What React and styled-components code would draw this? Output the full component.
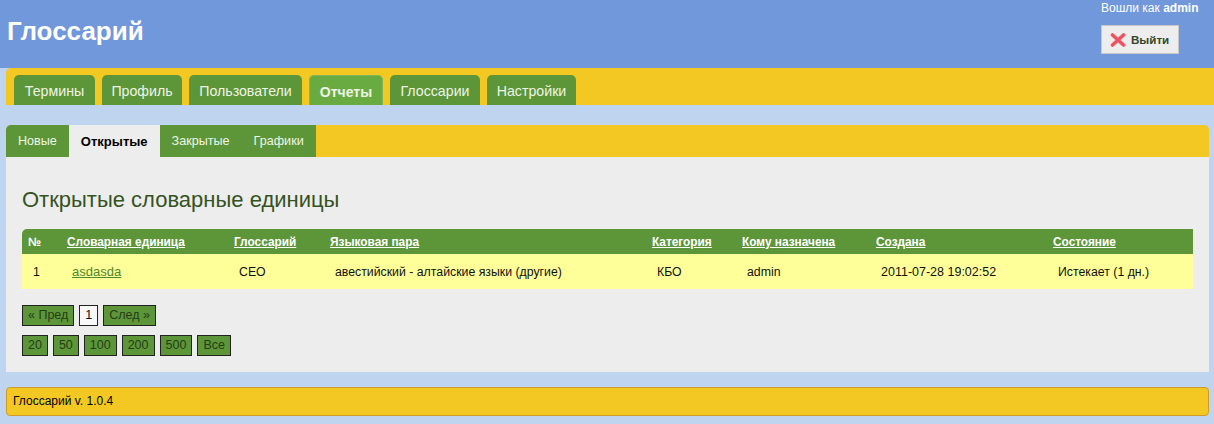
import styled, { createGlobalStyle } from 'styled-components';

const GlobalStyle = createGlobalStyle`
    html, body {
        margin: 0;
        padding: 0;
        background: #BFD4EE;
        font-family: "Liberation Sans", Arial, sans-serif;
        font-size: 12px;
    }
`;

const mainTabs = [
    ['Термины', 81], ['Профиль', 80], ['Пользователи', 113],
    ['Отчеты', 74], ['Глоссарии', 90], ['Настройки', 89],
];
const subTabs = ['Новые', 'Открытые', 'Закрытые', 'Графики'];
const columns = [
    ['№', 39], ['Словарная единица', 167], ['Глоссарий', 96], ['Языковая пара', 322],
    ['Категория', 90], ['Кому назначена', 134], ['Создана', 177], ['Состояние', 146],
];
const cells = ['1', 'asdasda', 'CEO', 'авестийский - алтайские языки (другие)', 'КБО', 'admin', '2011-07-28 19:02:52', 'Истекает (1 дн.)'];
const sizes = ['20', '50', '100', '200', '500', 'Все'];

export default function App() {
    return (
        <Page>
            <GlobalStyle />
            <Header>
                <Logo>Глоссарий</Logo>
                <UserBox>
                    <span>Вошли как <b>admin</b></span>
                    <LogoutButton>
                        <svg width="16" height="14" viewBox="0 0 16 14">
                            <path d="M2.5 2 L13.5 12 M13.5 2 L2.5 12" stroke="#F0525F" strokeWidth="3.6" strokeLinecap="round" />
                        </svg>
                        Выйти
                    </LogoutButton>
                </UserBox>
            </Header>
            <MainNav>
                {mainTabs.map(([tab, width]) => (
                    <MainTab key={tab} $width={width} $active={tab === 'Отчеты'}>{tab}</MainTab>
                ))}
            </MainNav>
            <Content>
                <SubNav>
                    {subTabs.map((tab) => (
                        <SubTab key={tab} $active={tab === 'Открытые'}>{tab}</SubTab>
                    ))}
                </SubNav>
                <Panel>
                    <Title>Открытые словарные единицы</Title>
                    <Table>
                        <colgroup>
                            {columns.map(([name, width]) => <col key={name} width={width} />)}
                        </colgroup>
                        <thead>
                            <tr>
                                {columns.map(([name], i) => (
                                    <th key={name}>{i === 0 ? name : <a href="#">{name}</a>}</th>
                                ))}
                            </tr>
                        </thead>
                        <tbody>
                            <tr>
                                {cells.map((cell, i) => (
                                    <td key={cell}>{i === 1 ? <a href="#">{cell}</a> : cell}</td>
                                ))}
                            </tr>
                        </tbody>
                    </Table>
                    <Pager>
                        <PageButton>« Пред</PageButton>
                        <PageButton $current>1</PageButton>
                        <PageButton>След »</PageButton>
                    </Pager>
                    <Pager>
                        {sizes.map((size) => <PageButton key={size}>{size}</PageButton>)}
                    </Pager>
                </Panel>
                <Footer>Глоссарий v. 1.0.4</Footer>
            </Content>
        </Page>
    );
}

const Page = styled.div`
    width: 1214px;
    height: 424px;
    overflow: hidden;
`;

const Header = styled.header`
    height: 68px;
    background: #7098DA;
    display: flex;
    justify-content: space-between;
    color: #fff;
`;

const Logo = styled.div`
    font-size: 26px;
    font-weight: 700;
    padding: 16px 0 0 7px;
    line-height: 30px;
`;

const UserBox = styled.div`
    width: 113px;
    font-size: 12px;
    line-height: 14px;
    display: flex;
    flex-direction: column;
    align-items: flex-start;
    gap: 10px;
    padding-top: 1px;
`;

const LogoutButton = styled.div`
    width: 78px;
    height: 29px;
    box-sizing: border-box;
    background: #EDEDED;
    border: 1px solid #C8C8C8;
    color: #33452C;
    font-weight: 700;
    font-size: 11.6px;
    display: flex;
    align-items: center;
    gap: 5px;
    padding-left: 8px;
`;

const MainNav = styled.nav`
    height: 37px;
    box-sizing: border-box;
    margin-left: 6px;
    padding: 7px 0 0 8px;
    background: #F3C823;
    border-top-left-radius: 5px;
    display: flex;
    gap: 7px;
    align-items: flex-end;
`;

const MainTab = styled.div`
    width: ${(p) => p.$width}px;
    height: 30px;
    box-sizing: border-box;
    text-align: center;
    line-height: ${(p) => (p.$active ? '32px' : '33px')};
    font-size: ${(p) => (p.$active ? '14px' : '14.2px')};
    font-weight: ${(p) => (p.$active ? 700 : 400)};
    color: #EEF5E6;
    background: ${(p) => (p.$active ? '#6AAB41' : '#5C9639')};
    border: ${(p) => (p.$active ? '1px solid #7DB55A' : 'none')};
    border-bottom: none;
    border-top-left-radius: 5px;
    border-top-right-radius: 5px;
`;

const Content = styled.main`
    padding: 20px 5px 0 6px;
`;

const SubNav = styled.div`
    height: 32px;
    background: #F3C823;
    border-top-left-radius: 5px;
    border-top-right-radius: 5px;
    display: flex;
    overflow: hidden;
`;

const SubTab = styled.div`
    padding: 0 12px;
    line-height: 33px;
    font-size: ${(p) => (p.$active ? '13px' : '12.6px')};
    font-weight: ${(p) => (p.$active ? 700 : 400)};
    color: ${(p) => (p.$active ? '#000' : '#EEF5E6')};
    background: ${(p) => (p.$active ? '#EDEDED' : '#5C9639')};
`;

const Panel = styled.section`
    height: 215px;
    box-sizing: border-box;
    background: #EDEDED;
    padding: 30px 16px 0;
`;

const Title = styled.h1`
    margin: 0 0 16px;
    font-size: 22px;
    line-height: 26px;
    font-weight: 400;
    color: #34531F;
`;

const Table = styled.table`
    width: 1171px;
    border-collapse: collapse;
    table-layout: fixed;
    margin-bottom: 16px;
    font-size: 12px;

    thead tr {
        background: #5C9639;
    }

    th {
        height: 25px;
        padding: 0 0 0 6px;
        text-align: left;
        font-size: 11.85px;
        font-weight: 700;
        color: #fff;
    }

    th:first-child {
        border-top-left-radius: 5px;
    }

    th a {
        color: #fff;
    }

    tbody tr {
        background: #FFFF99;
    }

    td {
        height: 35px;
        padding: 0 0 0 11px;
        font-size: 12.3px;
        color: #111;
    }

    td:nth-child(7) {
        font-size: 12.5px;
    }

    td a {
        font-size: 13px;
        color: #4F8A2C;
    }
`;

const Pager = styled.div`
    display: flex;
    gap: 5px;
    margin-bottom: 9px;
`;

const PageButton = styled.div`
    height: 21px;
    box-sizing: border-box;
    padding: 0 5px;
    border: 1px solid #222;
    line-height: 19px;
    font-size: 12.5px;
    color: ${(p) => (p.$current ? '#111' : '#253D17')};
    background: ${(p) => (p.$current ? '#F8F8F8' : '#5C9639')};
`;

const Footer = styled.footer`
    margin-top: 15px;
    height: 29px;
    box-sizing: border-box;
    padding-left: 6px;
    line-height: 27px;
    font-size: 12px;
    color: #000;
    background: #F3C823;
    border: 1px solid #D19A2A;
    border-radius: 4px;
`;
